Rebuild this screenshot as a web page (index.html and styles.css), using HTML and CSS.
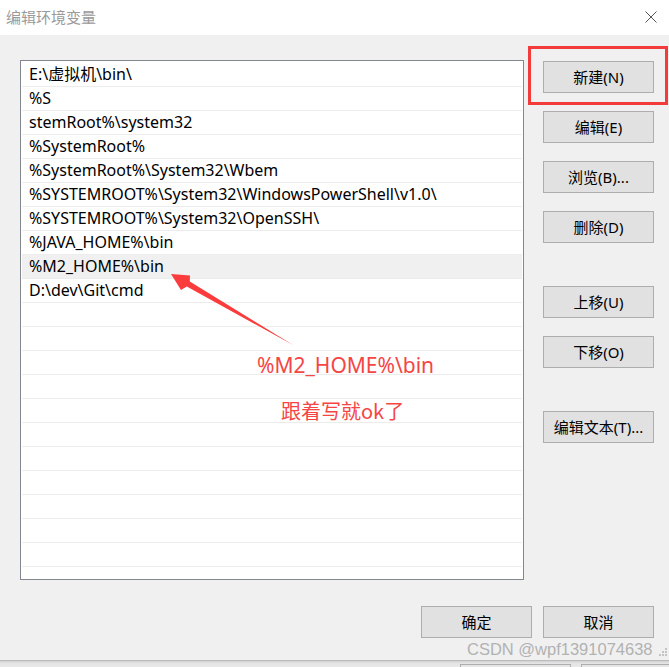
FILE: index.html
```html
<!DOCTYPE html>
<html lang="zh-CN">
<head>
<meta charset="utf-8">
<title>编辑环境变量</title>
<link rel="stylesheet" href="styles.css">
</head>
<body>
<div class="window">
  <div class="titlebar">
    <span class="title">编辑环境变量</span>
    <svg class="close" width="12" height="12" viewBox="0 0 12 12"><path d="M0.5 0.5 L11.5 11.5 M11.5 0.5 L0.5 11.5" stroke="#555" stroke-width="1" fill="none"/></svg>
  </div>
  <div class="content">
    <div class="main">
      <div class="list">
        <div class="row">E:\虚拟机\bin\</div>
        <div class="row">%S</div>
        <div class="row">stemRoot%\system32</div>
        <div class="row">%SystemRoot%</div>
        <div class="row">%SystemRoot%\System32\Wbem</div>
        <div class="row">%SYSTEMROOT%\System32\WindowsPowerShell\v1.0\</div>
        <div class="row">%SYSTEMROOT%\System32\OpenSSH\</div>
        <div class="row">%JAVA_HOME%\bin</div>
        <div class="row row-sel">%M2_HOME%\bin</div>
        <div class="row">D:\dev\Git\cmd</div>
        <div class="row"></div>
        <div class="row"></div>
        <div class="row"></div>
        <div class="row"></div>
        <div class="row"></div>
        <div class="row"></div>
        <div class="row"></div>
        <div class="row"></div>
        <div class="row"></div>
        <div class="row"></div>
        <div class="row"></div>
      </div>
      <div class="side">
        <button class="btn">新建(N)</button>
        <button class="btn">编辑(E)</button>
        <button class="btn">浏览(B)...</button>
        <button class="btn">删除(D)</button>
        <button class="btn btn-gap">上移(U)</button>
        <button class="btn">下移(O)</button>
        <button class="btn btn-gap">编辑文本(T)...</button>
      </div>
    </div>
    <div class="footer">
      <button class="btn">确定</button>
      <button class="btn">取消</button>
    </div>
  </div>
</div>
<div class="below">
  <div class="bg-btn bg-btn-1"></div>
  <div class="bg-btn bg-btn-2"></div>
</div>

<div class="highlight-box"></div>
<svg class="arrow" width="669" height="667" viewBox="0 0 669 667">
  <polygon points="171,274 190,275.5 189.8,281.4 293,345 186.8,286.6 181,290" fill="#fb3c3c"/>
</svg>
<div class="note note-1">%M2_HOME%\bin</div>
<div class="note note-2">跟着写就ok了</div>
<div class="watermark">CSDN @wpf1391074638</div>
<svg class="grip" width="12" height="12" viewBox="0 0 12 12">
  <rect x="8" y="1" width="2" height="2" fill="#c4c4c4"/>
  <rect x="5" y="4" width="2" height="2" fill="#c4c4c4"/>
  <rect x="8" y="4" width="2" height="2" fill="#c4c4c4"/>
  <rect x="2" y="7" width="2" height="2" fill="#c4c4c4"/>
  <rect x="5" y="7" width="2" height="2" fill="#c4c4c4"/>
  <rect x="8" y="7" width="2" height="2" fill="#c4c4c4"/>
</svg>
</body>
</html>
```

FILE: styles.css
```css
html, body {
  margin: 0;
  padding: 0;
}
body {
  width: 669px;
  height: 667px;
  overflow: hidden;
  position: relative;
  background: #e9e9e9;
  font-family: "Noto Sans", "Noto Sans CJK SC", sans-serif;
  font-size: 15px;
  color: #000;
}
.window {
  width: 669px;
  height: 660px;
  background: #f0f0f0;
  display: flex;
  flex-direction: column;
}
.titlebar {
  height: 35px;
  background: #fff;
  display: flex;
  align-items: center;
  justify-content: space-between;
  padding: 0 12px 0 6px;
  box-sizing: border-box;
  flex: none;
}
.title {
  font-family: "Noto Sans CJK SC", sans-serif;
  font-size: 15px;
  color: #9a9a9a;
  line-height: 1;
  margin-top: -2px;
}
.close {
  display: block;
  margin-top: -2px;
}
.content {
  padding: 25px 15px 0 20px;
}
.main {
  display: flex;
  gap: 19px;
}
.list {
  width: 504px;
  height: 520px;
  box-sizing: border-box;
  border: 1px solid #828790;
  background: #fff;
  padding: 2px 1px 0 1px;
  overflow: hidden;
}
.row {
  height: 24px;
  box-sizing: border-box;
  border-bottom: 1px solid #ececec;
  padding-left: 7px;
  line-height: 23px;
  font-size: 16px;
  white-space: nowrap;
}
.row-sel {
  background: #f0f0f0;
}
.side {
  display: flex;
  flex-direction: column;
  gap: 18px;
  padding-top: 1px;
}
.btn {
  width: 111px;
  height: 32px;
  box-sizing: border-box;
  border: 1px solid #adadad;
  background: #e1e1e1;
  font-family: "Noto Sans", "Noto Sans CJK SC", sans-serif;
  font-size: 15px;
  color: #000;
  padding: 0;
  margin: 0;
  line-height: 1;
}
.btn-gap {
  margin-top: 25px;
}
.footer {
  display: flex;
  justify-content: flex-end;
  gap: 11px;
  margin-top: 26px;
}
.below {
  height: 7px;
  background: linear-gradient(#a9a9a9 0, #d0d0d0 1px, #e4e4e4 3px, #e9e9e9 100%);
  position: relative;
}
.bg-btn {
  position: absolute;
  top: 4px;
  height: 10px;
  border: 1px solid #adadad;
  background: #e6e6e6;
}
.bg-btn-1 {
  left: 460px;
  width: 109px;
}
.bg-btn-2 {
  left: 581px;
  width: 100px;
}
.highlight-box {
  position: absolute;
  left: 528px;
  top: 46px;
  width: 140px;
  height: 59px;
  box-sizing: border-box;
  border: 3px solid #f23c3c;
}
.arrow {
  position: absolute;
  left: 0;
  top: 0;
  pointer-events: none;
}
.note {
  position: absolute;
  color: #f54545;
  line-height: 1;
  white-space: nowrap;
}
.note-1 {
  left: 257px;
  top: 355px;
  font-size: 21px;
}
.note-2 {
  left: 281px;
  top: 401px;
  font-family: "Noto Sans CJK SC", sans-serif;
  font-size: 20px;
}
.watermark {
  position: absolute;
  left: 467px;
  top: 641px;
  font-family: "Liberation Sans", sans-serif;
  font-size: 16.5px;
  line-height: 17px;
  color: #b2b2b2;
  white-space: nowrap;
}
.grip {
  position: absolute;
  left: 657px;
  top: 647px;
}
```
